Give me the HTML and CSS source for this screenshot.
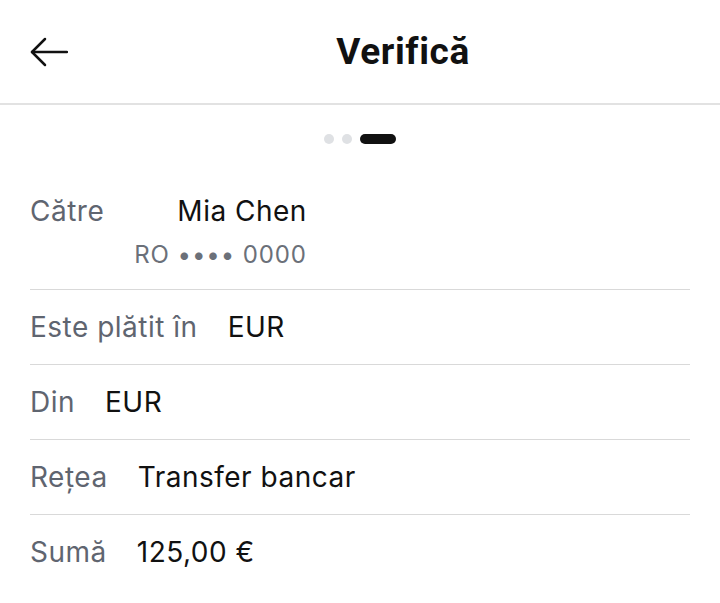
FILE: index.html
```html
<!DOCTYPE html>
<html lang="ro">
<head>
    <meta charset="UTF-8">
    <meta name="viewport" content="width=device-width, initial-scale=1.0">
    <title>Verifică</title>
    <link rel="stylesheet" href="styles.css">
</head>
<body>
    <div class="header">
        <div class="back">
            <svg width="38" height="30" viewBox="0 0 38 30" fill="none" stroke="#111" stroke-width="2.5" stroke-linecap="round" stroke-linejoin="round">
                <path d="M37 15H2"/>
                <path d="M15 2L2 15l13 13"/>
            </svg>
        </div>
        <h1 class="title">Verifică</h1>
    </div>

    <div class="steps">
        <span class="dot"></span>
        <span class="dot"></span>
        <span class="dot active"></span>
    </div>

    <div class="list">
        <div class="row">
            <div class="label">Către</div>
            <div class="value stacked">
                <div>Mia Chen</div>
                <div class="sub">RO •••• 0000</div>
            </div>
        </div>
        <div class="row">
            <div class="label">Este plătit în</div>
            <div class="value">EUR</div>
        </div>
        <div class="row">
            <div class="label">Din</div>
            <div class="value">EUR</div>
        </div>
        <div class="row">
            <div class="label">Rețea</div>
            <div class="value">Transfer bancar</div>
        </div>
        <div class="row">
            <div class="label">Sumă</div>
            <div class="value">125,00 €</div>
        </div>
    </div>
</body>
</html>
```

FILE: styles.css
```css
body {
    margin: 0;
    background-color: #fff;
    font-family: Inter, "Noto Sans", sans-serif;
    color: #111;
}
.header {
    display: flex;
    align-items: center;
    gap: 16px;
    height: 103px;
    padding-left: 30px;
    border-bottom: 2px solid #e2e2e2;
}
.back {
    width: 40px;
    display: flex;
    align-items: center;
}
.title {
    flex: 1;
    margin: 0;
    text-align: center;
    font-family: Roboto, sans-serif;
    font-weight: 700;
    font-size: 37px;
    letter-spacing: 0.6px;
}
.steps {
    display: flex;
    justify-content: center;
    gap: 8px;
    padding-top: 29px;
    margin-bottom: 30px;
}
.dot {
    width: 10px;
    height: 10px;
    border-radius: 5px;
    background-color: #dfe1e4;
}
.dot.active {
    width: 36px;
    background-color: #111;
}

.list {
    margin: 0 30px;
}
.row {
    display: flex;
    gap: 30px;
    padding: 20px 0;
    border-bottom: 1px solid #d9d9d9;
    font-size: 28px;
    line-height: 34px;
    letter-spacing: 0.5px;
}
.row:last-child {
    border-bottom: none;
}
.label {
    color: #5f6570;
}
.stacked {
    display: flex;
    flex-direction: column;
    align-items: flex-end;
    gap: 12px;
}
.sub {
    font-size: 24px;
    line-height: 29px;
    letter-spacing: 0.9px;
    color: #6b7079;
}
```
